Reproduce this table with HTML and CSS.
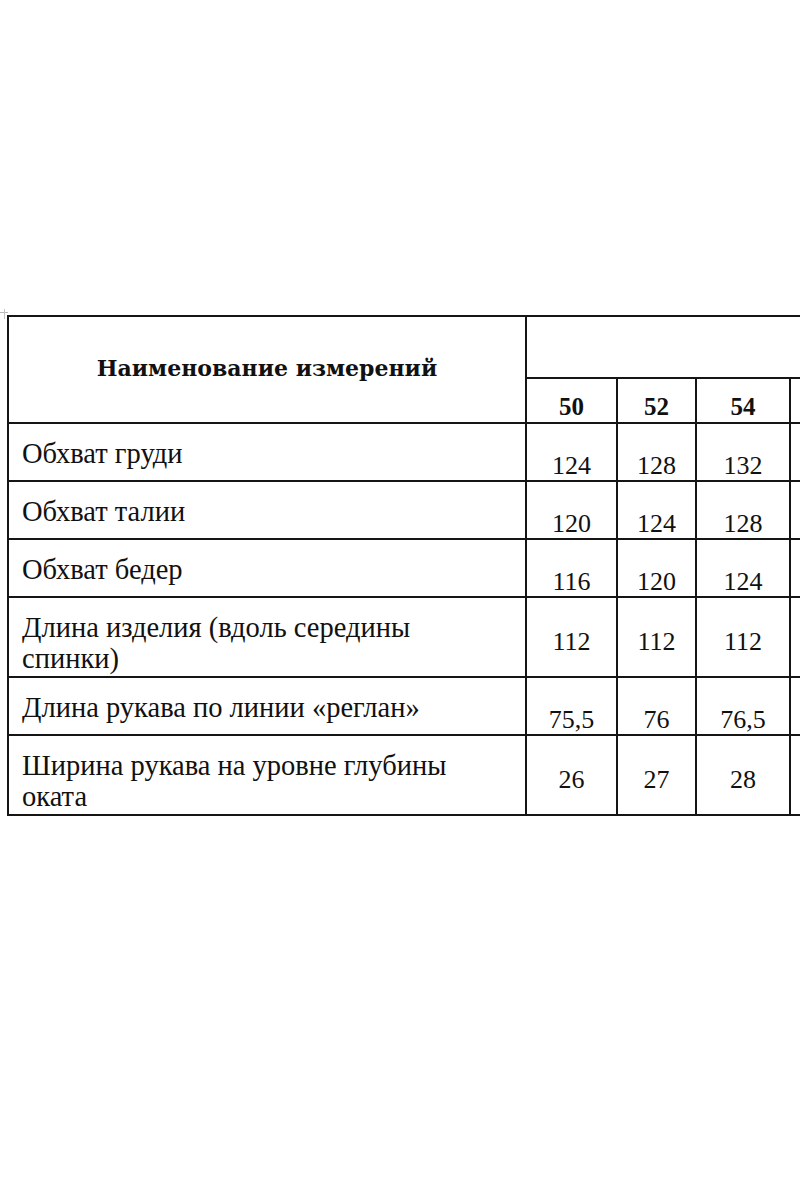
FILE: index.html
```html
<!DOCTYPE html>
<html lang="ru">
<head>
<meta charset="utf-8">
<title>Таблица размеров</title>
<link rel="stylesheet" href="styles.css">
</head>
<body>
<div class="page">
  <div class="frame">
    <span class="handle"></span>
    <table class="sizes">
      <colgroup>
        <col class="c-name">
        <col class="c-1">
        <col class="c-2">
        <col class="c-3">
        <col class="c-4">
      </colgroup>
      <tr class="r-top">
        <th class="title" rowspan="2">Наименование измерений</th>
        <th class="group" colspan="4"></th>
      </tr>
      <tr class="r-sizes">
        <th class="size">50</th>
        <th class="size">52</th>
        <th class="size">54</th>
        <th class="size"></th>
      </tr>
      <tr class="r-single">
        <td class="name">Обхват груди</td>
        <td class="num low">124</td><td class="num low">128</td><td class="num low">132</td><td class="num"></td>
      </tr>
      <tr class="r-single">
        <td class="name">Обхват талии</td>
        <td class="num low">120</td><td class="num low">124</td><td class="num low">128</td><td class="num"></td>
      </tr>
      <tr class="r-single">
        <td class="name">Обхват бедер</td>
        <td class="num low">116</td><td class="num low">120</td><td class="num low">124</td><td class="num"></td>
      </tr>
      <tr class="r-double">
        <td class="name">Длина изделия (вдоль середины<br>спинки)</td>
        <td class="num mid">112</td><td class="num mid">112</td><td class="num mid">112</td><td class="num"></td>
      </tr>
      <tr class="r-single">
        <td class="name">Длина рукава по линии «реглан»</td>
        <td class="num low">75,5</td><td class="num low">76</td><td class="num low">76,5</td><td class="num"></td>
      </tr>
      <tr class="r-double">
        <td class="name">Ширина рукава на уровне глубины<br>оката</td>
        <td class="num mid">26</td><td class="num mid">27</td><td class="num mid">28</td><td class="num"></td>
      </tr>
    </table>
  </div>
</div>
</body>
</html>
```

FILE: styles.css
```css
html, body {
  margin: 0;
  padding: 0;
  background: #ffffff;
}

.page {
  width: 800px;
  height: 1200px;
  overflow: hidden;
  padding-top: 315px;
  box-sizing: border-box;
}

.frame {
  position: relative;
  padding-left: 7px;
}

.handle {
  position: absolute;
  left: 0;
  top: -3px;
  width: 8px;
  height: 8px;
  border-top: 1px solid #b8b8b8;
}

.handle::after {
  content: "";
  position: absolute;
  left: 4px;
  top: -4px;
  width: 1px;
  height: 10px;
  background: #c4c4c4;
}

.sizes {
  border-collapse: collapse;
  table-layout: fixed;
  width: 872px;
  font-family: "Liberation Serif", "Times New Roman", serif;
  color: #111111;
}

.sizes th,
.sizes td {
  border: 2px solid #151515;
  padding: 0;
}

.c-name { width: 518px; }
.c-1 { width: 91px; }
.c-2 { width: 79px; }
.c-3 { width: 94px; }
.c-4 { width: 90px; }

.r-top { height: 62px; }
.r-sizes { height: 45px; }
.r-single { height: 58px; }
.r-double { height: 80px; }

.sizes .title {
  font-family: "DejaVu Serif", "Liberation Serif", serif;
  font-size: 22px;
  font-weight: bold;
  text-align: center;
  vertical-align: middle;
  line-height: 28px;
  padding-bottom: 4px;
}

.sizes .size {
  font-size: 25px;
  font-weight: bold;
  text-align: center;
  vertical-align: bottom;
  line-height: 28px;
  padding-bottom: 1px;
}

.sizes .name {
  font-size: 28.5px;
  line-height: 31px;
  text-align: left;
  vertical-align: top;
  padding: 14px 8px 0 13px;
}

.sizes .num {
  font-size: 26px;
  line-height: 28px;
  text-align: center;
}

.sizes .low {
  vertical-align: bottom;
}

.sizes .mid {
  vertical-align: middle;
  padding-top: 10px;
}
```
